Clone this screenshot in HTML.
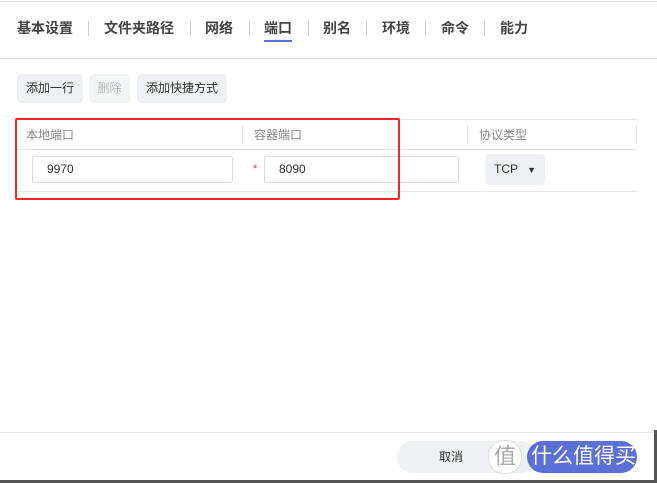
<!DOCTYPE html>
<html><head><meta charset="utf-8"><style>
body{margin:0;width:657px;height:483px;background:#fff;font-family:"Liberation Sans","Noto Sans CJK SC",sans-serif;position:relative;overflow:hidden;color:#333}
.a{position:absolute}
.tab{position:absolute;top:18px;font-size:14px;color:#444;line-height:20px;font-weight:bold}
.sep{position:absolute;top:21px;width:1px;height:15px;background:#ccc}
.btn{position:absolute;top:74px;height:29px;background:#eef0f3;border-radius:4px;font-size:12px;line-height:29px;text-align:center;color:#333}
.hd{position:absolute;top:126px;font-size:12px;color:#888}
.vs{position:absolute;top:125px;width:1px;height:18px;background:#e3e3e3}
.inp{position:absolute;top:156px;height:27px;border:1px solid #dcdcdc;border-radius:3px;box-sizing:border-box;font-size:12px;line-height:25px;padding-left:14px;color:#333}
</style></head><body>
<div class="a" style="left:0;top:1px;width:657px;height:1px;background:#e6e6e6"></div>
<div class="tab" style="left:17px">基本设置</div><div class="sep" style="left:88px"></div>
<div class="tab" style="left:104px">文件夹路径</div><div class="sep" style="left:190px"></div>
<div class="tab" style="left:205px">网络</div><div class="sep" style="left:249px"></div>
<div class="tab" style="left:264px">端口</div><div class="sep" style="left:308px"></div>
<div class="tab" style="left:323px">别名</div><div class="sep" style="left:366px"></div>
<div class="tab" style="left:382px">环境</div><div class="sep" style="left:425px"></div>
<div class="tab" style="left:441px">命令</div><div class="sep" style="left:484px"></div>
<div class="tab" style="left:500px">能力</div>
<div class="a" style="left:264px;top:40px;width:28px;height:2px;background:#5b6fd6"></div>
<div class="a" style="left:0;top:58px;width:657px;height:1px;background:#e3e3e3"></div>
<div class="btn" style="left:17px;width:66px">添加一行</div>
<div class="btn" style="left:89px;width:41px;color:#bbb;background:#f3f4f6">删除</div>
<div class="btn" style="left:137px;width:90px">添加快捷方式</div>
<div class="a" style="left:17px;top:149px;width:620px;height:1px;background:#e6e6e6"></div>
<div class="a" style="left:17px;top:119px;width:620px;height:1px;background:#e6e6e6"></div>
<div class="a" style="left:17px;top:191px;width:620px;height:1px;background:#e6e6e6"></div>
<div class="hd" style="left:26px">本地端口</div><div class="vs" style="left:242px"></div>
<div class="hd" style="left:254px">容器端口</div><div class="vs" style="left:467px"></div>
<div class="hd" style="left:479px">协议类型</div><div class="vs" style="left:636px"></div>
<div class="inp" style="left:32px;width:201px">9970</div>
<div class="a" style="left:253px;top:163px;color:#e33;font-size:11px">*</div>
<div class="inp" style="left:264px;width:195px">8090</div>
<div class="a" style="left:485px;top:154px;width:60px;height:31px;background:#eef0f3;border-radius:4px;font-size:12px;line-height:31px;padding-left:9px;box-sizing:border-box">TCP <span style="font-size:9px;margin-left:6px">▼</span></div>
<div class="a" style="left:15px;top:118px;width:385px;height:82px;border:2px solid #ee2a22;border-radius:2px;box-sizing:border-box"></div>
<div class="a" style="left:0;top:432px;width:657px;height:1px;background:#e6e6e6"></div>
<div class="a" style="left:397px;top:441px;width:140px;height:32px;background:#eef0f3;border-radius:16px;font-size:12px;line-height:32px;padding-left:42px;box-sizing:border-box">取消</div>
<div class="a" style="left:488px;top:440px;width:32px;height:32px;border-radius:16px;background:#fff;border:1px solid #ddd;color:#aaa;font-size:22px;line-height:32px;text-align:center">值</div>
<div class="a" style="left:527px;top:441px;width:110px;height:32px;background:#5b6fd6;border-radius:16px;color:#fff;font-size:21px;line-height:32px;padding-left:4px;box-sizing:border-box;white-space:nowrap">什么值得买</div>
<div class="a" style="left:0;top:480px;width:657px;height:3px;background:#555"></div>
<div class="a" style="left:654px;top:430px;width:3px;height:53px;background:#555"></div>
</body></html>
